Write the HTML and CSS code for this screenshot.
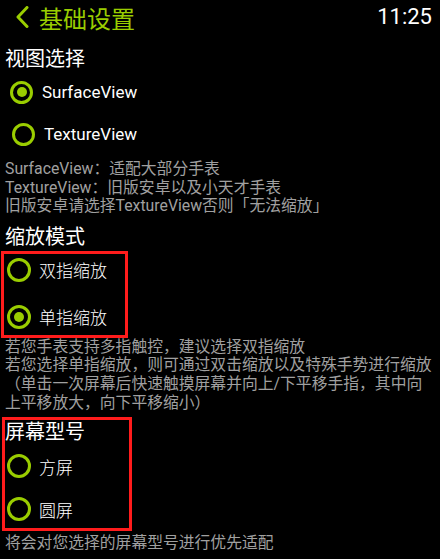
FILE: index.html
```html
<!DOCTYPE html>
<html lang="zh">
<head>
<meta charset="utf-8">
<link rel="stylesheet" href="styles.css">
</head>
<body>
<div class="page">
  <header class="topbar">
    <div class="back">
      <svg class="chev" width="14" height="22" viewBox="0 0 14 22"><polyline points="12,1.5 3,11 12,20.5" fill="none" stroke="#9acd00" stroke-width="3" stroke-linecap="round" stroke-linejoin="round"/></svg>
      <span class="title">基础设置</span>
    </div>
    <span class="time">11:25</span>
  </header>

  <h2 class="heading h1">视图选择</h2>
  <div class="group g1">
    <div class="radio r1"><span class="circle on"></span><span class="label latin">SurfaceView</span></div>
    <div class="radio r2"><span class="circle"></span><span class="label latin">TextureView</span></div>
  </div>
  <p class="desc d1">SurfaceView：适配大部分手表<br>TextureView：旧版安卓以及小天才手表<br>旧版安卓请选择TextureView否则「无法缩放」</p>

  <h2 class="heading h2">缩放模式</h2>
  <div class="box box1">
    <div class="radio rb"><span class="circle"></span><span class="label">双指缩放</span></div>
    <div class="radio rb"><span class="circle on"></span><span class="label">单指缩放</span></div>
  </div>
  <p class="desc d2">若您手表支持多指触控，建议选择双指缩放<br>若您选择单指缩放，则可通过双击缩放以及特殊手势进行缩放<br>（单击一次屏幕后快速触摸屏幕并向上/下平移手指，其中向<br>上平移放大，向下平移缩小）</p>

  <div class="box box2">
    <h2 class="heading h3">屏幕型号</h2>
    <div class="radio rc"><span class="circle"></span><span class="label">方屏</span></div>
    <div class="radio rc"><span class="circle"></span><span class="label">圆屏</span></div>
  </div>
  <p class="desc d3">将会对您选择的屏幕型号进行优先适配</p>
</div>
</body>
</html>
```

FILE: styles.css
```css
html, body {
  margin: 0;
  padding: 0;
  background: #000;
}
body {
  width: 440px;
  height: 559px;
  overflow: hidden;
  font-family: Roboto, "Noto Sans CJK SC", sans-serif;
  color: #fff;
}
.page {
  padding-left: 5px;
}
.topbar {
  display: flex;
  justify-content: space-between;
  align-items: flex-start;
  height: 36px;
  padding-right: 8px;
}
.back {
  display: flex;
  align-items: center;
  height: 34px;
  margin-left: 10px;
}
.chev {
  display: block;
}
.title {
  font-family: "Noto Sans CJK SC", sans-serif;
  font-size: 24px;
  line-height: 35px;
  color: #9acd00;
  margin-left: 10px;
}
.time {
  font-family: Roboto, sans-serif;
  font-size: 22px;
  line-height: 32px;
  padding-top: 1px;
  color: #fff;
}
.heading {
  margin: 0;
  font-family: "Noto Sans CJK SC", sans-serif;
  font-weight: normal;
  font-size: 20px;
  line-height: 24px;
  color: #fff;
}
.h1 { margin-top: 10px; }
.h2 { margin-top: 8px; }
.h3 { line-height: 22px; margin-bottom: 6px; }

.group.g1 {
  padding-top: 1px;
}
.radio {
  display: flex;
  align-items: center;
}
.r1, .r2 {
  height: 42px;
  padding-left: 5px;
}
.r2 { padding-left: 7px; }
.circle {
  box-sizing: border-box;
  width: 23px;
  height: 23px;
  border: 3px solid #9acd00;
  border-radius: 50%;
  display: flex;
  align-items: center;
  justify-content: center;
  flex: none;
}
.circle.on::after {
  content: "";
  width: 10px;
  height: 10px;
  border-radius: 50%;
  background: #9acd00;
}
.label {
  font-family: "Noto Sans CJK SC", sans-serif;
  font-size: 17px;
  font-weight: 300;
  color: #fff;
  margin-left: 9px;
}
.label.latin {
  font-family: Roboto, sans-serif;
  font-weight: normal;
}
.desc {
  margin: 0;
  font-family: Roboto, "Noto Sans CJK SC", sans-serif;
  font-size: 15.8px;
  line-height: 18.6px;
  color: #a0a0a0;
  white-space: nowrap;
}
.d1 { margin-top: 5px; }
.box {
  box-sizing: border-box;
  border: 3px solid #ff1c1c;
}
.box1 {
  width: 127px;
  margin-left: -4px;
  margin-top: 3px;
  padding: 0 0 2px 3px;
  display: flex;
  flex-direction: column;
  gap: 15px;
}
.rb {
  height: 32px;
}
.rb .circle { width: 24px; height: 24px; }
.rb .label { margin-left: 8px; }
.box2 {
  width: 130px;
  margin-left: -3px;
  margin-top: 5px;
  padding: 0 0 1px 0;
  display: flex;
  flex-direction: column;
}
.rc {
  height: 36px;
  padding-left: 2px;
}
.rc + .rc { margin-top: 7px; }
.rc .circle { width: 24px; height: 24px; }
.rc .label { margin-left: 8px; }
.d3 { margin-top: 3px; }
```
